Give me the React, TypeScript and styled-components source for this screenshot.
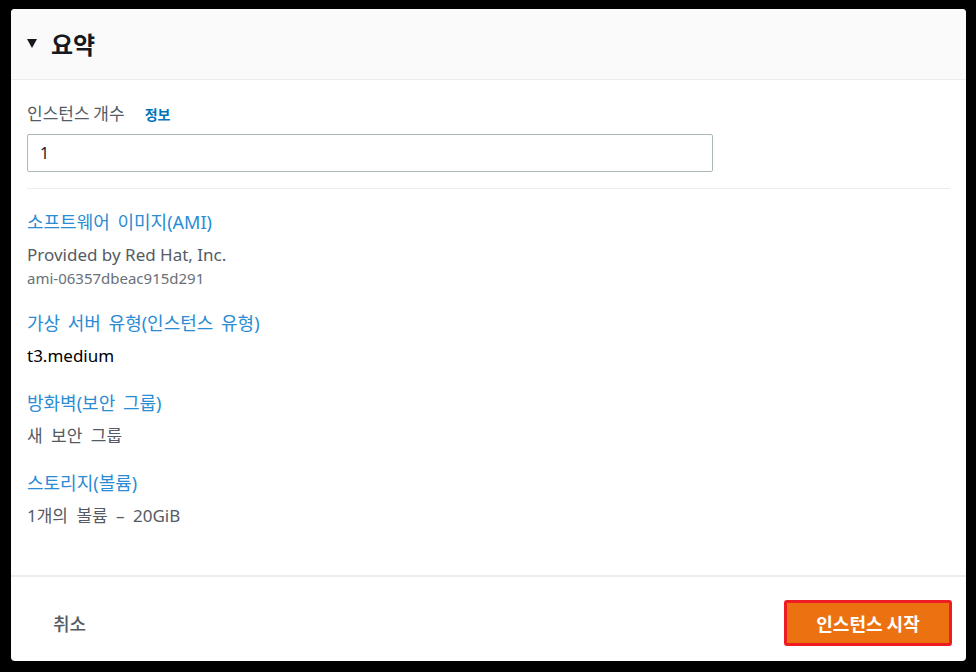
import styled, { createGlobalStyle } from "styled-components";

const GlobalStyle = createGlobalStyle`
  html, body {
    margin: 0;
    padding: 0;
    background: #000;
  }
  body {
    font-family: "Noto Sans", "Noto Sans CJK KR", sans-serif;
  }
`;

const Frame = styled.div`
  width: 976px;
  height: 672px;
  box-sizing: border-box;
  padding: 9px 10px 11px 11px;
  background: #000;
`;

const Card = styled.div`
  height: 100%;
  background: #fff;
  border-radius: 4px;
  overflow: hidden;
  display: flex;
  flex-direction: column;
`;

const Header = styled.div`
  height: 71px;
  flex-shrink: 0;
  display: flex;
  align-items: center;
  gap: 14px;
  padding-left: 16px;
  padding-bottom: 1px;
  box-sizing: border-box;
  background: #fafafa;
  border-bottom: 1px solid #eaeded;
`;

const Caret = styled.span`
  width: 0;
  height: 0;
  border-left: 5px solid transparent;
  border-right: 5px solid transparent;
  border-top: 9px solid #16191f;
`;

const Title = styled.h2`
  margin: 0;
  font-size: 24px;
  line-height: 30px;
  font-weight: 700;
  color: #16191f;
  font-family: "Noto Sans CJK KR", sans-serif;
`;

const Body = styled.div`
  flex: 1;
  padding: 23px 16px 0 16px;
`;

const FieldLabel = styled.div`
  font-size: 17px;
  line-height: 20px;
  color: #545b64;
  font-family: "Noto Sans CJK KR", sans-serif;
  display: flex;
  align-items: baseline;
  gap: 20px;
`;

const InfoLink = styled.span`
  font-size: 14px;
  font-weight: 700;
  color: #0073bb;
`;

const Input = styled.input`
  display: block;
  margin-top: 10px;
  width: 686px;
  height: 38px;
  box-sizing: border-box;
  border: 1px solid #aab7b8;
  border-radius: 2px;
  padding: 0 12px;
  font-size: 16px;
  color: #16191f;
  font-family: "Noto Sans", sans-serif;
  outline: none;
`;

const Divider = styled.div`
  margin-top: 16px;
  height: 1px;
  background: #eaeded;
`;

const Section = styled.div<{ first?: boolean }>`
  margin-top: ${(p) => (p.first ? "22px" : "25px")};
`;

const SectionTitle = styled.div`
  font-size: 18px;
  line-height: 22px;
  word-spacing: 3px;
  color: #2b8cd3;
  font-family: "Noto Sans", "Noto Sans CJK KR", sans-serif;
`;

const Value = styled.div<{ dark?: boolean; spaced?: boolean }>`
  margin-top: 11px;
  font-size: 17px;
  line-height: 22px;
  word-spacing: ${(p) => (p.spaced ? "4px" : "0")};
  color: ${(p) => (p.dark ? "#000" : "#545b64")};
  font-family: "Noto Sans", "Noto Sans CJK KR", sans-serif;
`;

const SubValue = styled.div`
  margin-top: 3px;
  font-size: 15px;
  line-height: 18px;
  color: #687078;
`;

const Footer = styled.div`
  height: 86px;
  flex-shrink: 0;
  box-sizing: border-box;
  border-top: 2px solid #eaeded;
  padding: 23px 14px 0 42px;
  display: flex;
  justify-content: space-between;
  align-items: flex-start;
`;

const CancelButton = styled.button`
  border: none;
  background: none;
  padding: 0;
  height: 46px;
  font-size: 18px;
  font-weight: 500;
  color: #545b64;
  font-family: "Noto Sans CJK KR", sans-serif;
`;

const LaunchButton = styled.button`
  width: 168px;
  height: 46px;
  box-sizing: border-box;
  border: 3px solid #ee1d24;
  border-radius: 3px;
  background: #ec7211;
  color: #fff;
  font-size: 18px;
  font-weight: 700;
  font-family: "Noto Sans CJK KR", sans-serif;
`;

const summary = [
  {
    title: "소프트웨어 이미지(AMI)",
    value: "Provided by Red Hat, Inc.",
    sub: "ami-06357dbeac915d291",
  },
  { title: "가상 서버 유형(인스턴스 유형)", value: "t3.medium", dark: true },
  { title: "방화벽(보안 그룹)", value: "새 보안 그룹", spaced: true },
  { title: "스토리지(볼륨)", value: "1개의 볼륨 – 20GiB", spaced: true },
];

export default function App() {
  return (
    <Frame>
      <GlobalStyle />
      <Card>
        <Header>
          <Caret />
          <Title>요약</Title>
        </Header>
        <Body>
          <FieldLabel>
            인스턴스 개수
            <InfoLink>정보</InfoLink>
          </FieldLabel>
          <Input defaultValue="1" />
          <Divider />
          {summary.map((s, i) => (
            <Section key={s.title} first={i === 0}>
              <SectionTitle>{s.title}</SectionTitle>
              <Value dark={s.dark} spaced={s.spaced}>
                {s.value}
              </Value>
              {s.sub && <SubValue>{s.sub}</SubValue>}
            </Section>
          ))}
        </Body>
        <Footer>
          <CancelButton>취소</CancelButton>
          <LaunchButton>인스턴스 시작</LaunchButton>
        </Footer>
      </Card>
    </Frame>
  );
}
